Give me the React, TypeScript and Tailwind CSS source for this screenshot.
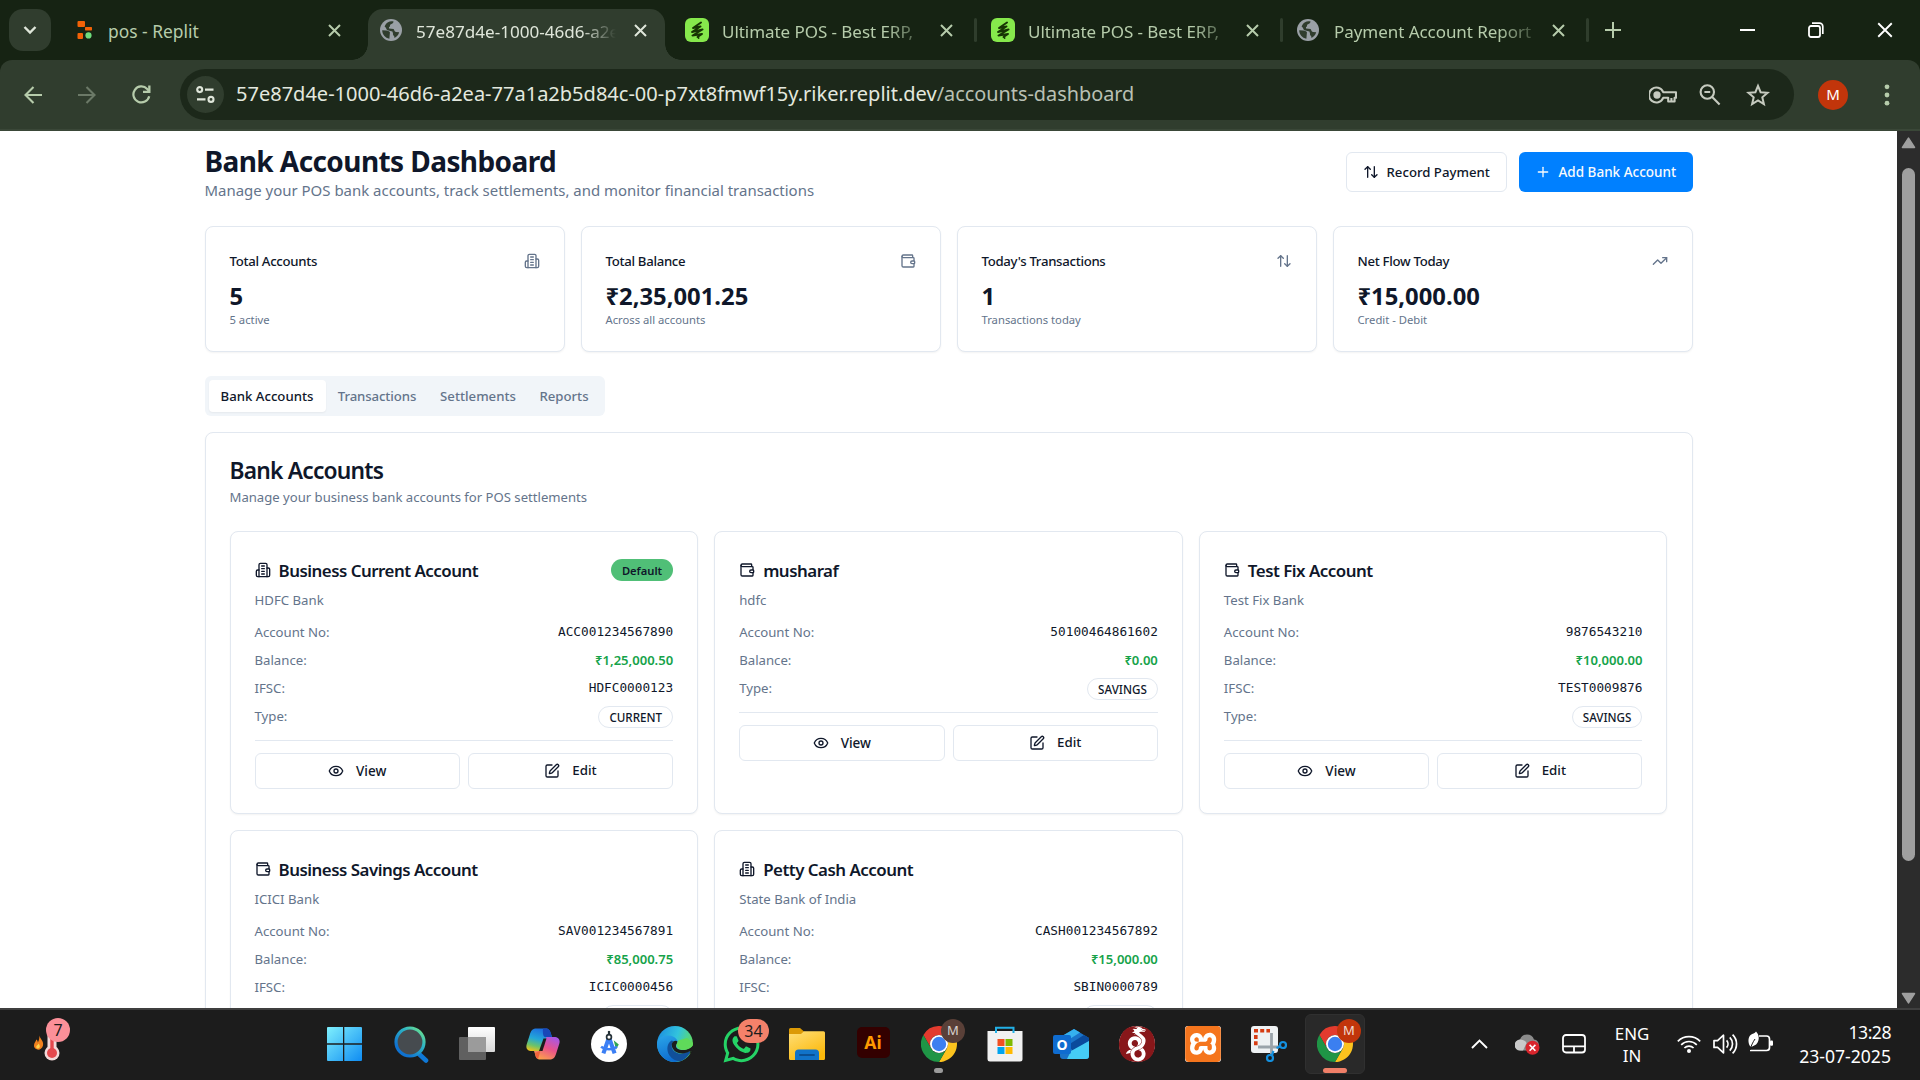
import type { ReactNode } from "react";
import { ArrowUpDown, Eye, Plus, SquarePen, TrendingUp, Wallet } from "lucide-react";
import { FaWhatsapp } from "react-icons/fa";
import { SiWireguard, SiXampp } from "react-icons/si";

/* ---------- Browser chrome ---------- */

function Globe() {
  return (
    <svg width="22" height="22" viewBox="0 0 22 22" className="shrink-0">
      <circle cx="11" cy="11" r="11" fill="#9aa0a6" />
      <path d="M2.2 11.3 L6.5 11.6 C9 12 10.6 13 9.8 14.8 L9.4 19.8 C5.2 19 2.2 15.6 2.2 11.3Z" fill="#303d2e" />
      <path d="M8 3.2 C9.6 2.2 12 2 13.6 2.6 C13.2 4.6 12 5.2 10.4 5.4 C9.6 6.4 10.6 7.6 9 8 L9 9.6 L13.6 10 C14.6 11.4 14.2 12.6 16 13 L19.2 13.2 C18.4 16 16.6 18 14.4 19 C14.8 16.6 12.6 16.8 13 14.6 L12.4 12.4 L7.4 11.2 C6 10.6 6.6 8.6 4.6 7.6 C5.4 5.6 6.4 4.2 8 3.2Z" fill="#303d2e" />
    </svg>
  );
}

function ReplitIcon() {
  return (
    <svg width="16" height="20" viewBox="0 0 16 20" className="shrink-0">
      <rect x="0.5" y="1" width="7.5" height="6" rx="1" fill="#f26207" />
      <rect x="8" y="7" width="7" height="3.4" rx="0.6" fill="#f26207" />
      <rect x="0.5" y="13" width="5.5" height="6" rx="1" fill="#f26207" />
      <circle cx="11.5" cy="15.4" r="3.1" fill="#6fdc7c" />
    </svg>
  );
}

function UltimateIcon() {
  return (
    <svg width="24" height="24" viewBox="0 0 24 24" className="shrink-0">
      <rect width="24" height="24" rx="6" fill="#86e84c" />
      <path
        d="M16 4.5 L8 10 L15.5 8.5 L7 14 L17.5 11.5 L7.5 17.5 L17 16 L12.5 19"
        fill="none"
        stroke="#173404"
        strokeWidth="2"
        strokeLinecap="round"
        strokeLinejoin="round"
      />
      <circle cx="13.6" cy="20" r="0.9" fill="#173404" />
    </svg>
  );
}

function Cross({ size = 13, width = 2 }: { size?: number; width?: number }) {
  return (
    <svg width={size} height={size} viewBox="0 0 13 13" className="shrink-0">
      <path d="M1 1L12 12M12 1L1 12" stroke="currentColor" strokeWidth={width} />
    </svg>
  );
}

function Tab({ icon, title }: { icon: ReactNode; title: string }) {
  return (
    <div className="flex h-[51px] w-[306px] items-center text-[#b6ccab]">
      <div className="flex w-[37px] shrink-0 justify-start">{icon}</div>
      <div className="w-[200px] overflow-hidden pt-[3px] text-[17px] tracking-[-0.05px] whitespace-nowrap [mask-image:linear-gradient(to_right,black_82%,transparent_105%)]">
        {title}
      </div>
      <div className="ml-[18px]">
        <Cross />
      </div>
      <div className="ml-[21px] h-6 w-[3px] rounded bg-[#2f3d2c]" />
    </div>
  );
}

function TabStrip() {
  return (
    <div className="flex h-[60px] items-start bg-[#162313] pt-[9px]">
      <div className="ml-[9px] flex h-[42px] w-[42px] items-center justify-center rounded-[14px] bg-[#303d2e]">
        <svg width="14" height="10" viewBox="0 0 14 10">
          <path d="M1.5 2L7 7.6L12.5 2" fill="none" stroke="#dfe6da" strokeWidth="2.4" />
        </svg>
      </div>
      <div className="flex h-[42px] w-[317px] items-center pl-[26px] text-[#b6ccab]">
        <ReplitIcon />
        <div className="w-[220px] pt-[3px] pl-[15px] text-[17.4px]">pos - Replit</div>
        <div className="ml-[15px]">
          <Cross />
        </div>
      </div>
      <div className="relative flex h-[51px] w-[297px] items-center rounded-t-[15px] bg-[#303d2e] pb-[9px] pl-3">
        <div className="absolute bottom-0 -left-4 h-4 w-4 bg-[radial-gradient(circle_at_0_0,transparent_15.5px,#303d2e_16px)]" />
        <div className="absolute -right-4 bottom-0 h-4 w-4 bg-[radial-gradient(circle_at_100%_0,transparent_15.5px,#303d2e_16px)]" />
        <Globe />
        <div className="ml-[14px] w-[202px] overflow-hidden pt-[3px] text-[17.1px] whitespace-nowrap text-[#dfe6da] [mask-image:linear-gradient(to_right,black_82%,transparent_99%)]">
          57e87d4e-1000-46d6-a2ea
        </div>
        <div className="ml-4 text-[#dfe6da]">
          <Cross />
        </div>
      </div>
      <div className="flex h-[42px] items-center pl-5">
        <Tab icon={<UltimateIcon />} title="Ultimate POS - Best ERP," />
        <Tab icon={<UltimateIcon />} title="Ultimate POS - Best ERP," />
        <Tab icon={<Globe />} title="Payment Account Report" />
      </div>
      <svg width="16" height="16" viewBox="0 0 16 16" className="mt-[13px] ml-[2px]">
        <path d="M8 0V16M0 8H16" stroke="#b6ccab" strokeWidth="2" />
      </svg>
      <div className="ml-auto flex h-[42px] items-center gap-[53px] pr-[27px] text-white">
        <svg width="15" height="3" viewBox="0 0 15 3">
          <rect width="15" height="2" fill="currentColor" />
        </svg>
        <svg width="16" height="16" viewBox="0 0 16 16">
          <rect x="1" y="4" width="11" height="11" rx="2" fill="none" stroke="currentColor" strokeWidth="1.8" />
          <path d="M4 1.2H11.5A3.3 3.3 0 0 1 14.8 4.5V12" fill="none" stroke="currentColor" strokeWidth="1.7" />
        </svg>
        <Cross size={16} width={1.5} />
      </div>
    </div>
  );
}

function Toolbar() {
  return (
    <div className="bg-[#162313]">
      <div className="flex h-[71px] items-center rounded-t-[12px] border-b-2 border-[#3a4738] bg-[#303d2e]">
        <svg width="18" height="18" viewBox="0 0 18 18" className="ml-6">
          <path d="M18 9H2M9.5 1L1.5 9L9.5 17" fill="none" stroke="#b6ccab" strokeWidth="2.1" />
        </svg>
        <svg width="18" height="18" viewBox="0 0 18 18" className="ml-9">
          <path d="M0 9H16M8.5 1L16.5 9L8.5 17" fill="none" stroke="#6b7967" strokeWidth="2.1" />
        </svg>
        <svg width="19" height="19" viewBox="0 0 19 19" className="ml-9">
          <path d="M17.2 11.2A8 8 0 1 1 15.2 3.9L17.4 6.4" fill="none" stroke="#b6ccab" strokeWidth="2.2" />
          <path d="M18.5 0.5V8H11V5.8H16.2V0.5Z" fill="#b6ccab" />
        </svg>
        <div className="ml-[29px] flex h-[51px] w-[1614px] items-center rounded-full bg-[#1c281a] pl-[7px]">
          <div className="flex h-[37px] w-[37px] items-center justify-center rounded-full bg-[#303d2e]">
            <svg width="19" height="17" viewBox="0 0 19 17" fill="none" stroke="#dfe6da" strokeWidth="2.1">
              <circle cx="3.7" cy="3.6" r="2.5" />
              <path d="M9 3.6H17.5M1 13.4H9.5" />
              <circle cx="15" cy="13.4" r="2.5" />
            </svg>
          </div>
          <div className="ml-3 text-[20.02px] whitespace-nowrap text-[#e3e8df]">
            57e87d4e-1000-46d6-a2ea-77a1a2b5d84c-00-p7xt8fmwf15y.riker.replit.dev
            <span className="text-[19.85px] text-[#b9c0b4]">/accounts-dashboard</span>
          </div>
          <div className="ml-auto flex items-center pr-6">
            <svg width="28" height="18" viewBox="0 0 28 18" fill="none" stroke="#c5cabf" strokeWidth="2.1">
              <path d="M14.2 6.2A7.4 7.4 0 1 0 14.2 11.8H19.2V15.5H25.6V11.8H27V6.2Z" strokeLinejoin="round" />
              <circle cx="8" cy="9" r="2.6" fill="#c5cabf" />
              <path d="M22.4 12V15.4" />
            </svg>
            <svg width="22" height="22" viewBox="0 0 22 22" fill="none" stroke="#c5cabf" strokeWidth="2.1" className="ml-[22px]">
              <circle cx="8.3" cy="8" r="6.7" />
              <path d="M13.2 13L20.6 20.6M5.4 8H11.2" />
            </svg>
            <svg width="24" height="24" viewBox="0 0 24 24" fill="none" stroke="#c5cabf" strokeWidth="2" className="ml-[25px]">
              <path d="M12 2.8L14.6 9.2L21.6 9.8L16.3 14.3L17.9 21.1L12 17.4L6.1 21.1L7.7 14.3L2.4 9.8L9.4 9.2Z" />
            </svg>
          </div>
        </div>
        <div className="ml-6 flex h-[30px] w-[30px] items-center justify-center rounded-full bg-[#c2350b] text-[15px] text-white">
          M
        </div>
        <svg width="6" height="22" viewBox="0 0 6 22" fill="#b6ccab" className="ml-9">
          <circle cx="3" cy="2.8" r="2.4" />
          <circle cx="3" cy="11" r="2.4" />
          <circle cx="3" cy="19.2" r="2.4" />
        </svg>
      </div>
    </div>
  );
}

function Scrollbar() {
  return (
    <div className="flex w-[23px] shrink-0 flex-col items-center bg-[#2c2c2c] pt-[6px] pb-1">
      <svg width="15" height="12" viewBox="0 0 15 12">
        <path d="M7.5 1.2L13.5 10.4H1.5Z" fill="#9f9f9f" stroke="#9f9f9f" strokeWidth="1.6" strokeLinejoin="round" />
      </svg>
      <div className="mt-[19px] h-[693px] w-[13px] rounded-full bg-[#9f9f9f]" />
      <svg width="15" height="12" viewBox="0 0 15 12" className="mt-auto">
        <path d="M7.5 10.8L13.5 1.6H1.5Z" fill="#9f9f9f" stroke="#9f9f9f" strokeWidth="1.6" strokeLinejoin="round" />
      </svg>
    </div>
  );
}

/* ---------- Dashboard ---------- */

function BankIcon({ size = 16, className }: { size?: number; className?: string }) {
  return (
    <svg
      width={size}
      height={size}
      viewBox="0 0 24 24"
      fill="none"
      stroke="currentColor"
      strokeWidth="2"
      strokeLinecap="round"
      strokeLinejoin="round"
      className={className}
    >
      <path d="M6 22V4a2 2 0 0 1 2-2h8a2 2 0 0 1 2 2v18Z" />
      <path d="M6 12H4a2 2 0 0 0-2 2v6a2 2 0 0 0 2 2h2" />
      <path d="M18 9h2a2 2 0 0 1 2 2v9a2 2 0 0 1-2 2h-2" />
      <path d="M10 6h4M10 10h4M10 14h4M10 18h4" />
    </svg>
  );
}

const stats = [
  { title: "Total Accounts", value: "5", note: "5 active", icon: BankIcon },
  { title: "Total Balance", value: "₹2,35,001.25", note: "Across all accounts", icon: Wallet },
  { title: "Today's Transactions", value: "1", note: "Transactions today", icon: ArrowUpDown },
  { title: "Net Flow Today", value: "₹15,000.00", note: "Credit - Debit", icon: TrendingUp },
];

type Account = {
  name: string;
  bank: string;
  number: string;
  balance: string;
  ifsc?: string;
  type: string;
  current?: boolean;
  isDefault?: boolean;
};

const accounts: Account[] = [
  { name: "Business Current Account", bank: "HDFC Bank", number: "ACC001234567890", balance: "₹1,25,000.50", ifsc: "HDFC0000123", type: "CURRENT", current: true, isDefault: true },
  { name: "musharaf", bank: "hdfc", number: "50100464861602", balance: "₹0.00", type: "SAVINGS" },
  { name: "Test Fix Account", bank: "Test Fix Bank", number: "9876543210", balance: "₹10,000.00", ifsc: "TEST0009876", type: "SAVINGS" },
  { name: "Business Savings Account", bank: "ICICI Bank", number: "SAV001234567891", balance: "₹85,000.75", ifsc: "ICIC0000456", type: "SAVINGS" },
  { name: "Petty Cash Account", bank: "State Bank of India", number: "CASH001234567892", balance: "₹15,000.00", ifsc: "SBIN0000789", type: "CURRENT", current: true },
];

function Row({ label, children }: { label: string; children: ReactNode }) {
  return (
    <div className="flex justify-between">
      <span className="pt-px text-[13.2px] leading-[19px] text-[#64748b]">{label}</span>
      {children}
    </div>
  );
}

function AccountCard({ account }: { account: Account }) {
  const Icon = account.current ? BankIcon : Wallet;
  return (
    <div className="rounded-lg border border-[#e2e8f0] bg-white p-6 shadow-xs">
      <div className="flex items-center justify-between">
        <div className="flex items-center gap-2">
          <Icon size={16} />
          <h3 className="pt-px text-[16.9px] leading-[27px] font-[560] tracking-[-0.5px]">{account.name}</h3>
        </div>
        {account.isDefault && (
          <span className="h-[22px] rounded-full bg-[#50bf77] px-[11px] pt-px text-[11.2px] leading-[21px] font-[560]">Default</span>
        )}
      </div>
      <p className="mt-1.5 pt-px text-[13.2px] leading-[19px] text-[#64748b]">{account.bank}</p>
      <div className="mt-3 flex flex-col gap-2">
        <Row label="Account No:">
          <span className="h-5 font-['DejaVu_Sans_Mono',monospace] text-[12.75px] leading-[19px]">{account.number}</span>
        </Row>
        <Row label="Balance:">
          <span className="pt-px text-[13.05px] leading-[19px] font-[560] text-[#16a34a]">{account.balance}</span>
        </Row>
        {account.ifsc && (
          <Row label="IFSC:">
            <span className="h-5 font-['DejaVu_Sans_Mono',monospace] text-[12.75px] leading-[19px]">{account.ifsc}</span>
          </Row>
        )}
        <Row label="Type:">
          <span className="h-[22px] rounded-full border border-[#e2e8f0] px-[10px] pt-px text-[11.65px] leading-[20px] font-[540]">
            {account.type}
          </span>
        </Row>
      </div>
      <div className="mt-3 flex gap-2 border-t border-[#e2e8f0] pt-3">
        <button className="flex h-9 flex-1 items-center justify-center gap-3 rounded-md border border-[#e2e8f0] text-[13.5px] font-medium">
          <Eye size={16} />
          View
        </button>
        <button className="flex h-9 flex-1 items-center justify-center gap-3 rounded-md border border-[#e2e8f0] text-[13.3px] font-medium">
          <SquarePen size={16} />
          Edit
        </button>
      </div>
    </div>
  );
}

function Dashboard() {
  return (
    <div className="flex-1 overflow-hidden bg-white text-[#0f172a]">
      <div className="mx-auto w-[1488px] pt-[11px]">
        <div className="flex items-center justify-between">
          <div>
            <h1 className="pt-[2px] text-[28px] leading-[34px] font-bold tracking-[-0.58px]">Bank Accounts Dashboard</h1>
            <p className="pt-px text-[14.96px] leading-[23px] text-[#64748b]">
              Manage your POS bank accounts, track settlements, and monitor financial transactions
            </p>
          </div>
          <div className="flex gap-3">
            <button className="flex h-10 w-[161px] items-center gap-2 rounded-md border border-[#e2e8f0] pl-4 text-[13.2px] font-medium whitespace-nowrap">
              <ArrowUpDown size={16} />
              <span className="pt-px">Record Payment</span>
            </button>
            <button className="flex h-10 w-[174px] items-center gap-2 rounded-md bg-[#0080ff] pl-4 text-[13.5px] font-medium whitespace-nowrap text-[#f8fafc]">
              <Plus size={16} />
              <span className="pt-px">Add Bank Account</span>
            </button>
          </div>
        </div>

        <div className="mt-6 grid grid-cols-4 gap-4">
          {stats.map(({ title, value, note, icon: Icon }) => (
            <div key={title} className="rounded-lg border border-[#e2e8f0] bg-white p-6 shadow-xs">
              <div className="flex items-center justify-between pb-2">
                <h3 className="pt-px text-[13.2px] leading-[19px] font-medium tracking-[-0.3px]">{title}</h3>
                <Icon size={16} className="text-[#64748b]" />
              </div>
              <div className="pt-[2px] text-[23.8px] leading-[30px] font-bold">{value}</div>
              <p className="pt-px text-[11.25px] leading-[15px] text-[#64748b]">{note}</p>
            </div>
          ))}
        </div>

        <div className="mt-6 flex h-10 w-[400px] rounded-md bg-[#f1f5f9] p-1 text-[13.2px] font-medium text-[#64748b]">
          <div className="flex w-[117px] items-center justify-center rounded-sm bg-white pt-px text-[#0f172a] shadow-xs">Bank Accounts</div>
          <div className="flex w-[103px] items-center justify-center pt-px tracking-[-0.1px]">Transactions</div>
          <div className="flex w-[99px] items-center justify-center pt-px">Settlements</div>
          <div className="flex w-[73px] items-center justify-center pt-px">Reports</div>
        </div>

        <div className="mt-4 rounded-lg border border-[#e2e8f0] bg-white p-6 shadow-xs">
          <h2 className="h-6 pt-px text-[22.8px] leading-[25px] font-[560] tracking-[-0.8px]">Bank Accounts</h2>
          <p className="mt-1.5 pt-px text-[13.12px] leading-[19px] text-[#64748b]">Manage your business bank accounts for POS settlements</p>
          <div className="mt-6 grid grid-cols-3 gap-4">
            {accounts.map((a) => (
              <AccountCard key={a.number} account={a} />
            ))}
          </div>
        </div>
      </div>
    </div>
  );
}

/* ---------- Taskbar ---------- */

function ChromeLogo() {
  return (
    <svg width="36" height="36" viewBox="0 0 48 48">
      <path d="M24 12H44.78A24 24 0 0 0 3.2 12L13.6 30A12 12 0 0 1 24 12Z" fill="#e33b2e" />
      <path d="M34.4 30L24 48A24 24 0 0 0 44.78 12H24A12 12 0 0 1 34.4 30Z" fill="#fcc31e" />
      <path d="M13.6 30L3.2 12A24 24 0 0 0 24 48L34.4 30A12 12 0 0 1 13.6 30Z" fill="#1f9546" />
      <circle cx="24" cy="24" r="12" fill="#fff" />
      <circle cx="24" cy="24" r="9.6" fill="#3b7ff0" />
    </svg>
  );
}

function StartIcon() {
  return (
    <svg width="36" height="36" viewBox="0 0 36 36">
      <defs>
        <linearGradient id="win" x1="0" y1="0" x2="1" y2="1">
          <stop offset="0" stopColor="#7ff0fd" />
          <stop offset="1" stopColor="#0f8cf2" />
        </linearGradient>
      </defs>
      <path d="M2 1H17V17.3H1V2A1 1 0 0 1 2 1ZM18.3 1H35A1 1 0 0 1 36 2V17.3H18.3ZM1 18.7H17V35H2A1 1 0 0 1 1 34ZM18.3 18.7H36V34A1 1 0 0 1 35 35H18.3Z" fill="url(#win)" />
    </svg>
  );
}

function SearchIcon() {
  return (
    <svg width="36" height="38" viewBox="0 0 36 38">
      <defs>
        <linearGradient id="srch" x1="0.9" y1="0" x2="0.2" y2="0.8">
          <stop offset="0" stopColor="#6fe38a" />
          <stop offset="0.4" stopColor="#2fb6c4" />
          <stop offset="1" stopColor="#0f72d0" />
        </linearGradient>
      </defs>
      <path d="M25.5 28.5L33 35.5" stroke="#0f78d6" strokeWidth="4.6" strokeLinecap="round" />
      <circle cx="17" cy="17" r="14" fill="#464b4f" stroke="url(#srch)" strokeWidth="3.2" />
    </svg>
  );
}

function TaskViewIcon() {
  return (
    <svg width="36" height="36" viewBox="0 0 36 36">
      <defs>
        <linearGradient id="tv" x1="0" y1="0" x2="0" y2="1">
          <stop offset="0" stopColor="#fff" />
          <stop offset="1" stopColor="#d8d8d8" />
        </linearGradient>
      </defs>
      <rect x="0" y="11" width="27" height="23" rx="1" fill="#606060" />
      <rect x="9" y="1" width="27" height="25" rx="1" fill="url(#tv)" />
      <rect x="9" y="11" width="18" height="15" fill="#9b9b9b" />
    </svg>
  );
}

function CopilotIcon() {
  return (
    <svg width="34" height="32" viewBox="0 0 34 32">
      <defs>
        <linearGradient id="cpa" x1="0.5" y1="0" x2="0.2" y2="1">
          <stop offset="0" stopColor="#1e6fe0" />
          <stop offset="0.45" stopColor="#23a7d8" />
          <stop offset="0.75" stopColor="#6cc36a" />
          <stop offset="1" stopColor="#f2c218" />
        </linearGradient>
        <linearGradient id="cpb" x1="0.8" y1="0" x2="0.3" y2="1">
          <stop offset="0" stopColor="#a657e8" />
          <stop offset="0.5" stopColor="#e9538b" />
          <stop offset="1" stopColor="#fba04c" />
        </linearGradient>
      </defs>
      <path d="M14 31.5C11 31.5 9.6 29 9 26L8 23H14L19 9H28C32.6 9 34.6 12 33.2 16L30 26C28.8 29.8 27 31.5 23.4 31.5Z" fill="url(#cpb)" />
      <path d="M20 0.5C23 0.5 24.4 3 25 6L26 9H20.4L15.4 23H6C1.4 23 -0.6 20 0.8 16L4 6C5.2 2.2 7 0.5 10.6 0.5Z" fill="url(#cpa)" />
      <path d="M17 0.5H20C23 0.5 24.4 3 25 6L26 9H19C17.5 9 16.5 6 17 0.5Z" fill="#1847b8" />
      <path d="M13 23H16.5L20.5 10.5H17.5Z" fill="#1c1c1c" />
      <path d="M9 25L14.5 22.8L12 31C10 30.4 9.4 28 9 25Z" fill="#f0643c" />
    </svg>
  );
}

function StudioIcon() {
  return (
    <div className="flex h-9 w-9 items-center justify-center rounded-full bg-white">
      <svg width="28" height="28" viewBox="0 0 30 30">
        <path d="M20 11L25.5 15.5L22.5 21Z" fill="#2fa552" />
        <path d="M15 8L9 25M15 8L21 25" stroke="#3b7ff5" strokeWidth="4.4" />
        <path d="M6.5 18C11 21.5 19 21.5 23.5 18" fill="none" stroke="#3b7ff5" strokeWidth="2.8" />
        <path d="M15 1V5" stroke="#263238" strokeWidth="2.4" />
        <circle cx="15" cy="7.6" r="2.6" fill="#fff" stroke="#263238" strokeWidth="1.8" />
      </svg>
    </div>
  );
}

function EdgeIcon() {
  return (
    <svg width="36" height="36" viewBox="0 0 36 36">
      <defs>
        <linearGradient id="eg1" x1="0" y1="0.2" x2="1" y2="0.6">
          <stop offset="0" stopColor="#1c8fe0" />
          <stop offset="0.5" stopColor="#32c3dd" />
          <stop offset="1" stopColor="#66e04c" />
        </linearGradient>
        <linearGradient id="eg2" x1="0" y1="0" x2="0.4" y2="1">
          <stop offset="0" stopColor="#2aa5e8" />
          <stop offset="1" stopColor="#0d6bd0" />
        </linearGradient>
      </defs>
      <circle cx="18" cy="18" r="18" fill="url(#eg1)" />
      <path d="M0 17C1 11 7 9 12 9.5C18 10 21 14 20.5 16C18 13.5 14.5 16 14.5 20C14.5 26 20 29 26 27.5C29 27 32 24.5 33.2 25.5C34 26.5 28 36 18 36C8 36 0 28.5 0 17Z" fill="url(#eg2)" />
      <path d="M14.5 14.5C10 17 9 24 12.5 29.5C15.5 34 21 35.8 24 35C28 33.6 33 28 33.2 25.8C32.6 24.6 29 27 26 27.5C19 28.8 13 23 15 17.5C15.4 16.2 16.2 15.6 16.8 15.2Z" fill="#11509a" />
      <path d="M20.5 15.4C20.5 17 19 18.6 19 20C19 23 23 24.3 27.5 24C32 23.6 35 21 36.5 19C36.5 24 34 27 32.4 28.4C33.4 26 33.4 25.4 33 25.3C31.5 26 29 27.3 26 27.5C19 28 14 23 14.8 18C15.6 15 18.8 14 20.5 15.4Z" fill="#1c1c1c" />
      <path d="M20 20.5C21 23.2 25 24.3 28.5 23.7C33 23 36 20 36 17L30 12L21 14.5C20.9 17 18.6 18 20 20.5Z" fill="#5fda5a" />
    </svg>
  );
}

function FolderIcon() {
  return (
    <svg width="36" height="36" viewBox="0 0 36 36">
      <defs>
        <linearGradient id="fld" x1="0" y1="0" x2="0.6" y2="1">
          <stop offset="0" stopColor="#ffdf78" />
          <stop offset="1" stopColor="#fbb90c" />
        </linearGradient>
      </defs>
      <path d="M0 10V3.5A1.5 1.5 0 0 1 1.5 2H11L15 5.5V10Z" fill="#dc9a06" />
      <path d="M0 8H12L15 5.2H34.5A1.5 1.5 0 0 1 36 6.7V32.5A1.5 1.5 0 0 1 34.5 34H1.5A1.5 1.5 0 0 1 0 32.5Z" fill="url(#fld)" />
      <path d="M6 34V27A3.5 3.5 0 0 1 9.5 23.5H26.5A3.5 3.5 0 0 1 30 27V34Z" fill="#1173c9" />
      <path d="M11 29H25" stroke="#0b4f92" strokeWidth="1.8" strokeLinecap="round" />
    </svg>
  );
}

function StoreIcon() {
  return (
    <svg width="36" height="36" viewBox="0 0 36 36">
      <path d="M9 7V1.8H26.5V7" fill="none" stroke="#22b0e6" strokeWidth="2" />
      <path d="M0.5 5H35.5V33A2.5 2.5 0 0 1 33 35.5H3A2.5 2.5 0 0 1 0.5 33Z" fill="#f1f1f1" />
      <path d="M9 5V7M26.5 5V7" stroke="#22b0e6" strokeWidth="2" />
      <rect x="10.5" y="13" width="7" height="7" fill="#f25022" />
      <rect x="18.5" y="13" width="7" height="7" fill="#7fba00" />
      <rect x="10.5" y="21" width="7" height="7" fill="#00a4ef" />
      <rect x="18.5" y="21" width="7" height="7" fill="#ffb900" />
    </svg>
  );
}

function OutlookIcon() {
  return (
    <div className="relative h-[30px] w-9">
      <svg width="36" height="30" viewBox="0 0 36 30">
        <path d="M6 9L21 0L36 9V27A3 3 0 0 1 33 30H10A3 3 0 0 1 7 27Z" fill="#1a73c8" />
        <path d="M9 7L21 0L27 3.6L12 13Z" fill="#35b1ee" />
        <path d="M15 16L31 6L36 9V12L20 22Z" fill="#0a4a9c" />
        <path d="M36 12V27A3 3 0 0 1 33 30H14L18 22Z" fill="#45ccf5" />
      </svg>
      <div className="absolute top-[6px] left-0 flex h-[19px] w-[18px] items-center justify-center rounded-[2px] bg-[#0f6cd0] text-[14px] leading-none font-bold text-white">
        O
      </div>
    </div>
  );
}

function SnipIcon() {
  return (
    <svg width="36" height="36" viewBox="0 0 36 36">
      <rect x="0" y="0" width="27" height="27" rx="3" fill="#eef1f3" />
      <path d="M3 4.8H19" stroke="#d63b12" strokeWidth="3.6" strokeDasharray="4 2.2" />
      <path d="M4.8 9V20" stroke="#d63b12" strokeWidth="3.6" strokeDasharray="4 2.2" />
      <path d="M20.5 7V28M7 21H28" stroke="#9aa3aa" strokeWidth="2.8" />
      <circle cx="32" cy="19" r="3" fill="none" stroke="#1490df" strokeWidth="2.2" />
      <circle cx="19" cy="32" r="3" fill="none" stroke="#1490df" strokeWidth="2.2" />
      <path d="M21 29L22.5 25M29 20.5L25.5 22" stroke="#1490df" strokeWidth="2.2" />
    </svg>
  );
}

function Cell({ children }: { children: ReactNode }) {
  return <div className="relative flex h-[60px] w-[66px] items-center justify-center">{children}</div>;
}

function WeatherWidget() {
  return (
    <div className="relative h-[60px] w-[312px] shrink-0">
      <svg width="30" height="34" viewBox="0 0 30 34" className="absolute top-[14px] left-[32px]">
        <path d="M7.5 7.5C8 11 12 13 11 17.5C10.4 20.6 7.6 22 5.4 21.6C2.6 21 1.4 18.6 2.2 16C2.8 14.2 4 13.6 4.2 11.6C5.4 12.4 5.8 13.2 5.8 14.4C7 12.6 7.4 10 7.5 7.5Z" fill="#f2811d" />
        <path d="M6.6 15.5C7.6 17 8.4 18.4 7.4 19.8C6.4 21 4.4 20.6 4.2 19C4.1 17.6 6.2 17 6.6 15.5Z" fill="#ffd34d" />
        <rect x="15.5" y="2" width="9" height="22" rx="4.5" fill="#f3d9d9" />
        <circle cx="20" cy="25" r="7.5" fill="#f3d9d9" />
        <circle cx="20" cy="25" r="5" fill="#e5484d" />
        <path d="M20 10V24" stroke="#e5484d" strokeWidth="3.4" strokeLinecap="round" />
      </svg>
      <div className="absolute top-[4px] left-[46px] flex h-6 w-6 items-center justify-center rounded-full bg-[#fb9099] text-[16px] text-[#1c1c1c]">
        7
      </div>
    </div>
  );
}

function Tray() {
  return (
    <div className="ml-auto flex h-[60px] items-center pr-[29px] text-white">
      <svg width="17" height="10" viewBox="0 0 17 10" fill="none" stroke="currentColor" strokeWidth="1.9">
        <path d="M1 9L8.5 1.5L16 9" />
      </svg>
      <svg width="25" height="22" viewBox="0 0 25 22" className="ml-[27px]">
        <path d="M6 17.5A5.6 5.6 0 0 1 5 6.5A7.4 7.4 0 0 1 19 6.5A5.6 5.6 0 0 1 19.5 17.5Z" fill="#8b8b8b" />
        <path d="M5 17.5A5.4 5.4 0 0 1 5 6.6C8 6.6 10.4 8 11.6 10L8 17.5Z" fill="#c9c9c9" />
        <circle cx="17.5" cy="14.8" r="7" fill="#d9252c" />
        <path d="M14.6 11.9L20.4 17.7M20.4 11.9L14.6 17.7" stroke="#fff" strokeWidth="1.6" />
      </svg>
      <svg width="24" height="20" viewBox="0 0 24 20" fill="none" stroke="currentColor" strokeWidth="1.8" className="ml-[22px]">
        <rect x="1" y="1" width="22" height="17.5" rx="3" />
        <path d="M1 12.4H23M12 12.4V18.5" />
      </svg>
      <div className="ml-7 w-9 pt-[2px] text-center text-[16.9px] leading-[22px]">
        ENG
        <br />
        IN
      </div>
      <svg width="24" height="20" viewBox="0 0 24 20" fill="none" stroke="currentColor" strokeWidth="1.7" className="ml-[27px]">
        <path d="M0.8 7.4A15.6 15.6 0 0 1 23.2 7.4" />
        <path d="M4.2 10.8A10.9 10.9 0 0 1 19.8 10.8" />
        <path d="M7.4 14A6.4 6.4 0 0 1 16.6 14" />
        <circle cx="12" cy="17" r="2" fill="currentColor" stroke="none" />
      </svg>
      <svg width="25" height="22" viewBox="0 0 25 22" fill="none" stroke="currentColor" strokeWidth="1.7" className="ml-3">
        <path d="M1 7.6H4.6L10.5 2.2V19.8L4.6 14.4H1Z" strokeLinejoin="round" />
        <path d="M13.6 7.4A5.4 5.4 0 0 1 13.6 14.6M16.8 4.4A9.4 9.4 0 0 1 16.8 17.6M19.6 1.6A13.2 13.2 0 0 1 19.6 20.4" />
      </svg>
      <svg width="26" height="22" viewBox="0 0 26 22" fill="none" stroke="currentColor" strokeWidth="1.7" className="mb-1 ml-[10px]">
        <path d="M11 5H18.5A3 3 0 0 1 21.5 8V16.5A3 3 0 0 1 18.5 19.5H2" />
        <rect x="22" y="9.6" width="3" height="5.2" rx="1" fill="currentColor" stroke="none" />
        <path d="M8 0.5C11 3.5 11.6 8 9.6 11.5C8 14.5 4.6 15.4 2.6 15.8C-0.5 12 0 6.4 2.6 4C4.6 2.4 6.8 2.6 8 0.5Z" fill="currentColor" stroke="none" />
        <path d="M2 19C3.2 14.4 5 11 7 8" stroke="#1c1c1c" strokeWidth="1" />
      </svg>
      <div className="w-[117px] text-right text-[17.6px] leading-6">
        <div className="-mt-px tracking-[-0.5px]">13:28</div>
        <div>23-07-2025</div>
      </div>
    </div>
  );
}

function Taskbar() {
  return (
    <div className="flex h-[72px] items-start border-t-2 border-[#3f3f3f] bg-[#1c1c1c] pt-1">
      <WeatherWidget />
      <Cell><div className="-ml-[3px]"><StartIcon /></div></Cell>
      <Cell><SearchIcon /></Cell>
      <Cell><TaskViewIcon /></Cell>
      <Cell><CopilotIcon /></Cell>
      <Cell><StudioIcon /></Cell>
      <Cell><EdgeIcon /></Cell>
      <Cell>
        <FaWhatsapp size={41} color="#25d366" />
        <span className="absolute top-[5px] left-[30px] flex h-6 w-[31px] items-center justify-center rounded-full bg-[#f4816a] text-[16px] text-[#1c1c1c]">34</span>
      </Cell>
      <Cell><FolderIcon /></Cell>
      <Cell>
        <div className="-mt-[3px] flex h-[31px] w-[33px] items-center justify-center rounded-[5px] bg-[#330000] text-[17.5px] leading-none font-bold text-[#ff9a00]">Ai</div>
      </Cell>
      <Cell>
        <ChromeLogo />
        <span className="absolute top-[5px] left-[35px] flex h-6 w-6 items-center justify-center rounded-full bg-[#5a4038] text-[13px] text-[#d9d2cf]">M</span>
        <span className="absolute bottom-[1px] left-[28px] h-[5px] w-[9px] rounded-full bg-[#9b9b9b]" />
      </Cell>
      <Cell><StoreIcon /></Cell>
      <Cell><OutlookIcon /></Cell>
      <Cell>
        <div className="flex h-9 w-9 items-center justify-center rounded-full bg-white">
          <SiWireguard size={36} color="#88171a" />
        </div>
      </Cell>
      <Cell>
        <div className="flex h-9 w-9 items-center justify-center rounded-[3px] bg-white">
          <SiXampp size={36} color="#f5751d" />
        </div>
      </Cell>
      <Cell><SnipIcon /></Cell>
      <Cell>
        <div className="absolute top-0 left-[3px] h-[60px] w-[60px] rounded-[6px] border border-[#303030] bg-[#292929]" />
        <div className="relative"><ChromeLogo /></div>
        <span className="absolute top-[5px] left-[35px] flex h-6 w-6 items-center justify-center rounded-full bg-[#c2350b] text-[13px] text-[#f3d9d0]">M</span>
        <span className="absolute bottom-[1px] left-[21px] h-[5px] w-6 rounded-full bg-[#f07f68]" />
      </Cell>
      <Tray />
    </div>
  );
}

export default function App() {
  return (
    <div className="flex h-[1080px] w-[1920px] flex-col overflow-hidden font-['Noto_Sans',sans-serif]">
      <TabStrip />
      <Toolbar />
      <div className="flex h-[877px] bg-white">
        <Dashboard />
        <Scrollbar />
      </div>
      <Taskbar />
    </div>
  );
}
